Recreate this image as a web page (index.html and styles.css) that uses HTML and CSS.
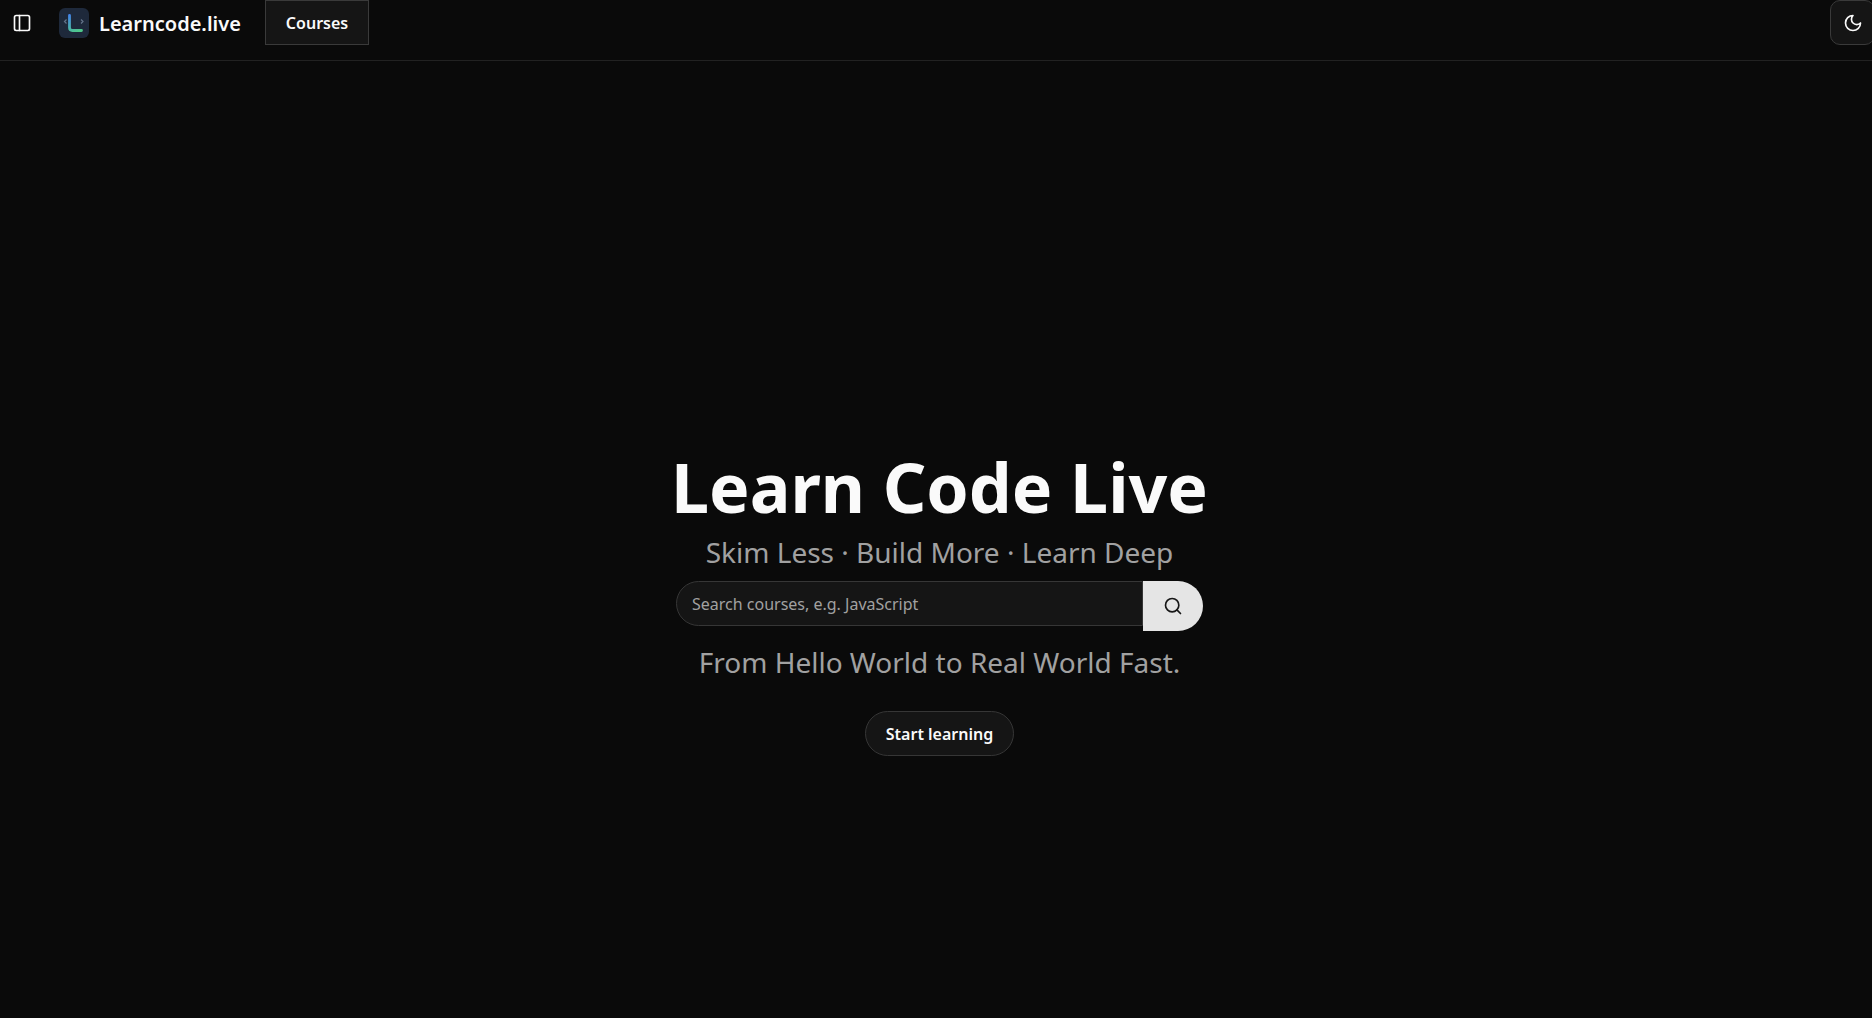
FILE: index.html
```html
<!DOCTYPE html>
<html lang="en">
<head>
<meta charset="utf-8">
<meta name="viewport" content="width=device-width, initial-scale=1">
<title>Learncode.live</title>
<link rel="stylesheet" href="styles.css">
</head>
<body>
<header class="topbar">
  <button class="icon-button" type="button" aria-label="Toggle sidebar">
    <svg class="icon" viewBox="0 0 24 24"><rect x="3" y="3" width="18" height="18" rx="2"/><path d="M9 3v18"/></svg>
  </button>
  <a class="brand" href="#">
    <svg class="logo" viewBox="0 0 30 30" aria-hidden="true">
      <defs>
        <linearGradient id="stroke" gradientUnits="userSpaceOnUse" x1="10" y1="6" x2="18" y2="24">
          <stop offset="0" stop-color="#4382f0"/>
          <stop offset="1" stop-color="#4fc98a"/>
        </linearGradient>
      </defs>
      <rect width="30" height="30" rx="6" fill="#1e293b"/>
      <path d="M10.500 7.500v12q0 3 3 3H22.500" fill="none" stroke="url(#stroke)" stroke-width="2.800" stroke-linecap="round"/>
      <path d="M7.500 11.500L5.500 13.500l2 2M22 11.500l2 2-2 2" fill="none" stroke="#64748b" stroke-width="1.200"/>
    </svg>
    <span>Learncode.live</span>
  </a>
  <nav class="nav"><a class="nav-link" href="#">Courses</a></nav>
  <button class="theme-button" type="button" aria-label="Toggle theme">
    <svg class="icon" viewBox="0 0 24 24"><path d="M12 3a6 6 0 0 0 9 9 9 9 0 1 1-9-9Z"/></svg>
  </button>
</header>
<main class="hero">
  <h1 class="title">Learn Code Live</h1>
  <p class="tagline">Skim Less · Build More · Learn Deep</p>
  <form class="search" role="search">
    <input class="search-input" type="search" aria-label="Search courses" placeholder="Search courses, e.g. JavaScript">
    <button class="search-button" type="button" aria-label="Search">
      <svg class="icon" viewBox="0 0 24 24"><circle cx="11" cy="11" r="8"/><path d="m21 21-4.300-4.300"/></svg>
    </button>
  </form>
  <p class="tagline">From Hello World to Real World Fast.</p>
  <a class="start" href="#">Start learning</a>
</main>
</body>
</html>
```
FILE: styles.css
```css
* { box-sizing: border-box; }

body {
  margin: 0;
  min-height: 100vh;
  display: flex;
  flex-direction: column;
  overflow-x: hidden;
  background: #0a0a0a;
  color: #fafafa;
  font-family: "Noto Sans", "Open Sans", sans-serif;
  font-size: 16px;
}

a { color: inherit; text-decoration: none; }
button { font: inherit; color: inherit; padding: 0; cursor: pointer; }

.icon {
  width: 20px;
  height: 20px;
  fill: none;
  stroke: currentColor;
  stroke-width: 2;
  stroke-linecap: round;
  stroke-linejoin: round;
}

.topbar {
  display: flex;
  align-items: flex-start;
  height: 61px;
  border-bottom: 1px solid #222222;
}

.icon-button {
  display: grid;
  place-items: center;
  width: 44px;
  height: 46px;
  border: 0;
  background: none;
}

.brand {
  display: flex;
  align-items: center;
  gap: 10px;
  height: 46px;
  margin: 0 24px 0 15px;
  font-size: 20px;
  font-weight: 600;
}

.logo { width: 30px; height: 30px; }

.nav-link {
  display: flex;
  align-items: center;
  height: 45px;
  padding: 0 20px;
  border: 1px solid #3a3a3a;
  background: #151515;
  font-weight: 600;
}

.theme-button {
  display: grid;
  place-items: center;
  width: 45px;
  height: 45px;
  margin: 0 -3px 0 auto;
  border: 1px solid #3a3a3a;
  border-radius: 10px;
  background: #151515;
}

.hero {
  flex: 1;
  display: flex;
  flex-direction: column;
  align-items: center;
  justify-content: center;
  padding: 126px 0 0 7px;
}

.title {
  margin: 0;
  font-size: 68px;
  font-weight: 700;
  line-height: 76px;
}

.tagline {
  margin: 0;
  color: #a1a1a1;
  font-size: 28px;
  line-height: 38px;
}

.tagline:first-of-type { margin: 8px 0 10px; }

.search {
  display: flex;
  align-items: flex-start;
  width: 527px;
  max-width: 100%;
  margin-bottom: 12px;
}

.search-input {
  flex: 1;
  min-width: 0;
  height: 45px;
  padding: 0 15px;
  border: 1px solid #363636;
  border-radius: 23px 0 0 23px;
  background: #151515;
  color: #fafafa;
  font: inherit;
  outline: 0;
}

.search-input::placeholder { color: #a1a1a1; opacity: 1; }

.search-button {
  display: grid;
  place-items: center;
  width: 60px;
  height: 50px;
  border: 0;
  border-radius: 0 25px 25px 0;
  background: #e5e5e5;
  color: #171717;
}

.start {
  display: flex;
  align-items: center;
  height: 45px;
  margin-top: 30px;
  padding: 0 20px;
  border: 1px solid #363636;
  border-radius: 23px;
  background: #151515;
  font-weight: 600;
}
```
